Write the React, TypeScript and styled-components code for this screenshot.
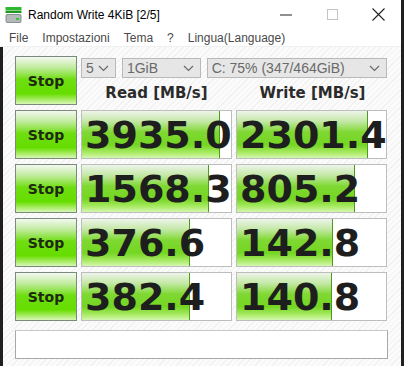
import React from "react";
import styled, { createGlobalStyle } from "styled-components";

const GlobalStyle = createGlobalStyle`
  html, body {
    margin: 0;
    padding: 0;
    background: #1f1f1f;
  }
  body {
    width: 404px;
    height: 366px;
    overflow: hidden;
  }
`;

const Window = styled.div`
  width: 401px;
  height: 366px;
  display: flex;
  flex-direction: column;
  font-family: "Liberation Sans", Arial, sans-serif;
`;

const TitleBar = styled.div`
  height: 29px;
  background: #ffffff;
  display: flex;
  align-items: center;
  padding-left: 5px;
`;

const Title = styled.span`
  font-size: 12px;
  color: #000;
  margin-left: 6px;
  flex: 1;
`;

const Controls = styled.div`
  display: flex;
  align-items: center;
  height: 100%;
`;

const ControlButton = styled.div`
  width: 46px;
  height: 100%;
  display: flex;
  align-items: center;
  justify-content: center;
`;

const MenuBar = styled.div`
  height: 17px;
  background: #ffffff;
  display: flex;
  align-items: center;
  gap: 14px;
  padding-left: 9px;
  border-bottom: 1px solid #f0f0f0;
`;

const MenuItem = styled.span`
  font-size: 12px;
  color: #4a4a4a;
`;

const Content = styled.div`
  flex: 1;
  margin-left: 3px;
  padding: 9px 13px 0 12px;
  background: repeating-linear-gradient(
    135deg,
    #fbfbfb 0px,
    #fbfbfb 3px,
    #f1f1f1 3px,
    #f1f1f1 4px
  );
  display: flex;
  flex-direction: column;
`;

const Grid = styled.div`
  display: grid;
  grid-template-columns: 62px 151px 151px;
  grid-auto-rows: 49px;
  column-gap: 4px;
  row-gap: 5px;
`;

const StopButton = styled.div`
  box-sizing: border-box;
  border: 1px solid #7b8b7b;
  background: linear-gradient(
    to bottom,
    #f3f8f0 0%,
    #c2eca0 22%,
    #6ede10 48%,
    #66dd00 78%,
    #a6ec60 90%,
    #d8f7b8 100%
  );
  display: flex;
  align-items: center;
  justify-content: center;
  font-family: "DejaVu Sans", Verdana, sans-serif;
  font-weight: bold;
  font-size: 14px;
  color: #1e2a10;
`;

const TopCell = styled.div`
  grid-column: 2 / span 2;
  display: flex;
  flex-direction: column;
`;

const Selects = styled.div`
  display: flex;
  gap: 6px;
  margin-top: 2px;
  height: 20px;
`;

const Select = styled.div<{ w: number }>`
  box-sizing: border-box;
  width: ${({ w }) => w}px;
  height: 20px;
  border: 1px solid #b9b9b9;
  background: #e6e6e6;
  display: flex;
  align-items: center;
  justify-content: space-between;
  padding: 0 6px 0 4px;
  font-size: 14px;
  color: #6a6a6a;
`;

const Headers = styled.div`
  flex: 1;
  display: grid;
  grid-template-columns: 151px 151px;
  column-gap: 5px;
`;

const Header = styled.div`
  display: flex;
  align-items: center;
  justify-content: center;
  padding-top: 2px;
  font-family: "DejaVu Sans", Verdana, sans-serif;
  font-weight: bold;
  font-size: 15px;
  color: #2b2b2b;
`;

const ValueBox = styled.div`
  position: relative;
  box-sizing: border-box;
  border: 1px solid #bdbdbd;
  background: #ffffff;
  overflow: hidden;
  display: flex;
  align-items: center;
`;

const Fill = styled.div`
  position: absolute;
  left: 0;
  top: 0;
  bottom: 0;
  border-right: 1px solid #4e9a1e;
  background: linear-gradient(
    to bottom,
    #eef4ea 0%,
    #c4e8a6 22%,
    #7fd832 45%,
    #74d622 72%,
    #a8ea62 88%,
    #d4f7b0 100%
  );
`;

const Value = styled.span`
  position: relative;
  padding-left: 3px;
  font-family: "DejaVu Sans", Verdana, sans-serif;
  font-weight: bold;
  font-size: 38px;
  letter-spacing: 0px;
  color: #1e1e1e;
  white-space: nowrap;
  line-height: 1;
`;

const StatusBar = styled.div`
  box-sizing: border-box;
  margin-top: 9px;
  width: 373px;
  height: 29px;
  border: 1px solid #a8a8a8;
  border-top-color: #c8c8c8;
  background: #ffffff;
`;

const Chevron = () => (
  <svg width="11" height="7" viewBox="0 0 11 7">
    <path d="M1 1 L5.5 5.5 L10 1" stroke="#6a6a6a" strokeWidth="1.2" fill="none" />
  </svg>
);

const AppIcon = () => (
  <svg width="17" height="18" viewBox="0 0 17 18">
    <rect x="0.5" y="1" width="16" height="3" fill="#2eb82e" />
    <rect x="0.5" y="4.5" width="16" height="2.5" fill="#1f9a1f" />
    <rect x="0.5" y="8" width="16" height="9" rx="2" fill="#8a9090" />
    <rect x="1.5" y="9" width="14" height="7" rx="1.5" fill="#b4baba" />
    <rect x="11" y="12" width="3" height="2" fill="#2ecc2e" />
  </svg>
);

const rows = [
  { read: "3935.0", readFill: 137, write: "2301.4", writeFill: 130 },
  { read: "1568.3", readFill: 126, write: "805.2", writeFill: 117 },
  { read: "376.6", readFill: 107, write: "142.8", writeFill: 95 },
  { read: "382.4", readFill: 107, write: "140.8", writeFill: 94 },
];

export default function App() {
  return (
    <>
      <GlobalStyle />
      <Window>
        <TitleBar>
          <AppIcon />
          <Title>Random Write 4KiB [2/5]</Title>
          <Controls>
            <ControlButton>
              <svg width="12" height="2" viewBox="0 0 12 2">
                <rect x="0" y="0.5" width="12" height="1" fill="#222" />
              </svg>
            </ControlButton>
            <ControlButton>
              <svg width="11" height="11" viewBox="0 0 11 11">
                <rect x="0.5" y="0.5" width="10" height="10" stroke="#c4c4c4" fill="none" />
              </svg>
            </ControlButton>
            <ControlButton>
              <svg width="13" height="13" viewBox="0 0 13 13">
                <path d="M0.5 0.5 L12.5 12.5 M12.5 0.5 L0.5 12.5" stroke="#222" strokeWidth="1.1" />
              </svg>
            </ControlButton>
          </Controls>
        </TitleBar>
        <MenuBar>
          <MenuItem>File</MenuItem>
          <MenuItem>Impostazioni</MenuItem>
          <MenuItem>Tema</MenuItem>
          <MenuItem>?</MenuItem>
          <MenuItem>Lingua(Language)</MenuItem>
        </MenuBar>
        <Content>
          <Grid>
            <StopButton>Stop</StopButton>
            <TopCell>
              <Selects>
                <Select w={35}>
                  <span>5</span>
                  <Chevron />
                </Select>
                <Select w={79}>
                  <span>1GiB</span>
                  <Chevron />
                </Select>
                <Select w={181}>
                  <span>C: 75% (347/464GiB)</span>
                  <Chevron />
                </Select>
              </Selects>
              <Headers>
                <Header>Read [MB/s]</Header>
                <Header>Write [MB/s]</Header>
              </Headers>
            </TopCell>
            {rows.map((r, i) => (
              <React.Fragment key={i}>
                <StopButton>Stop</StopButton>
                <ValueBox>
                  <Fill style={{ width: r.readFill }} />
                  <Value>{r.read}</Value>
                </ValueBox>
                <ValueBox>
                  <Fill style={{ width: r.writeFill }} />
                  <Value>{r.write}</Value>
                </ValueBox>
              </React.Fragment>
            ))}
          </Grid>
          <StatusBar />
        </Content>
      </Window>
    </>
  );
}
